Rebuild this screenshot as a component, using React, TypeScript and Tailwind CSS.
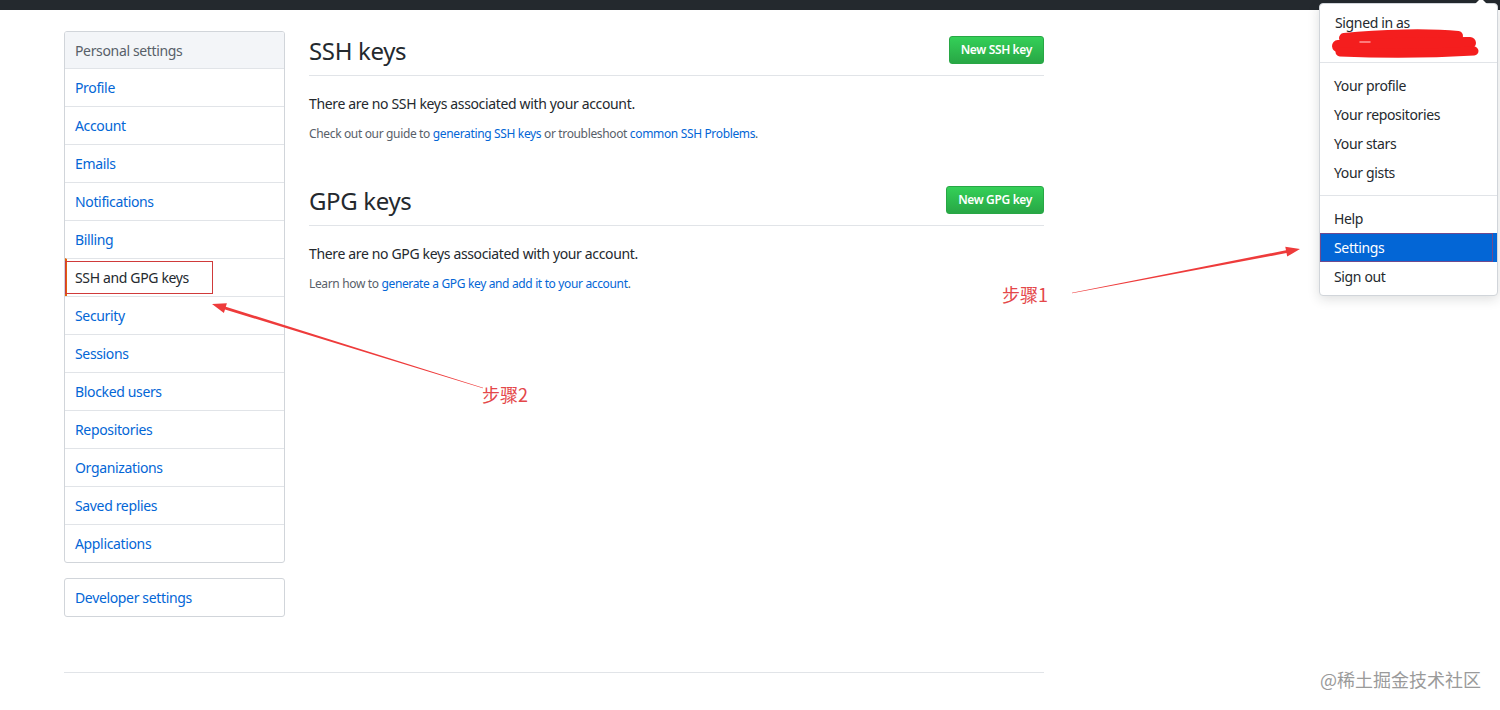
import React from 'react';

// Sidebar entries for the settings menu
const NAV_ITEMS = [
  'Profile',
  'Account',
  'Emails',
  'Notifications',
  'Billing',
  'SSH and GPG keys',
  'Security',
  'Sessions',
  'Blocked users',
  'Repositories',
  'Organizations',
  'Saved replies',
  'Applications',
];

const SELECTED = 'SSH and GPG keys';

const FONT = { fontFamily: '"Noto Sans", "Open Sans", Arial, sans-serif' };
const CJK = { fontFamily: '"Noto Sans CJK SC", "Noto Sans", sans-serif' };

const Sidebar = () => (
  <div className="w-[221px] shrink-0">
    <nav className="border border-[#d1d5da] rounded-[3px] overflow-hidden">
      <div className="h-[36px] flex items-center px-[10px] bg-[#f3f5f8] text-[14px] text-[#586069]">Personal settings</div>
      {NAV_ITEMS.map((item) => {
        const active = item === SELECTED;
        return (
          <div
            key={item}
            className={
              active
                ? 'h-[38px] flex items-center pl-[8px] border-t border-[#e1e4e8] border-l-2 border-l-[#e36209] text-[14px] text-[#24292e]'
                : 'h-[38px] flex items-center px-[10px] border-t border-[#e1e4e8] text-[14px] text-[#0366d6]'
            }
          >
            {item}
          </div>
        );
      })}
    </nav>
    <div className="mt-[15px] h-[39px] border border-[#d1d5da] rounded-[3px] flex items-center px-[10px] text-[14px] text-[#0366d6]">
      Developer settings
    </div>
  </div>
);

interface SectionProps {
  title: string;
  button: string;
  empty: string;
  children: React.ReactNode;
}

const KeySection = ({ title, button, empty, children }: SectionProps) => (
  <section>
    <div className="flex items-center justify-between border-b border-[#e1e4e8] pb-[8px] h-[45px]">
      <h2 className="pt-[4px] text-[24px] font-normal text-[#24292e] leading-none">{title}</h2>
      <button className="mt-[2px] h-[28px] px-[11px] rounded-[3px] border border-[#28a745] bg-gradient-to-b from-[#34d058] to-[#28a745] text-white text-[12px] font-semibold">
        {button}
      </button>
    </div>
    <p className="mt-[17px] text-[14px] text-[#24292e]">{empty}</p>
    <p className="mt-[11px] text-[12px] text-[#586069]">{children}</p>
  </section>
);

const Dropdown = () => (
  <div className="absolute left-[1319px] top-[3px] w-[179px] bg-white border border-[#d1d5da] rounded-[4px] shadow-[0_3px_12px_rgba(27,31,35,0.15)] text-[14px] text-[#24292e]">
    <div className="absolute -top-[6px] right-[10px] w-0 h-0 border-l-[6px] border-r-[6px] border-b-[6px] border-l-transparent border-r-transparent border-b-white" />
    <div className="relative h-[58px] px-[15px] pt-[8px]">
      <div>Signed in as</div>
      <svg className="absolute left-[10px] top-[24px]" width="152" height="34" viewBox="0 0 152 34">
        <path d="M14 10 C 50 6, 100 5, 128 8" stroke="#f41e1e" strokeWidth="10" strokeLinecap="round" fill="none" />
        <path d="M8 18 C 50 16, 100 15, 140 15" stroke="#f41e1e" strokeWidth="12" strokeLinecap="round" fill="none" />
        <path d="M10 24 C 60 26, 110 25, 144 23" stroke="#f41e1e" strokeWidth="9" strokeLinecap="round" fill="none" />
        <path d="M30 14 L 40 14" stroke="#ff9a9a" strokeWidth="1.5" strokeLinecap="round" />
      </svg>
    </div>
    <div className="border-t border-[#e1e4e8] py-[8px]">
      {['Your profile', 'Your repositories', 'Your stars', 'Your gists'].map((t) => (
        <div key={t} className="h-[29px] flex items-center px-[14px]">
          {t}
        </div>
      ))}
    </div>
    <div className="border-t border-[#e1e4e8] pt-[8px] pb-[4px]">
      <div className="h-[29px] flex items-center px-[14px]">Help</div>
      <div className="relative h-[29px] flex items-center px-[14px] bg-[#0366d6] text-white">
        Settings
        <div className="absolute inset-y-0 left-0 right-[4px] border border-[#6f4a8e]" />
      </div>
      <div className="h-[29px] flex items-center px-[14px]">Sign out</div>
    </div>
  </div>
);

const Annotations = () => (
  <>
    <div className="absolute left-[65px] top-[261px] w-[148px] h-[33px] border border-[#d03a3a]" />
    <svg className="absolute left-0 top-0 pointer-events-none" width="1500" height="710" viewBox="0 0 1500 710">
      <polygon
        fill="#ee3b3b"
        points="483.1,387.8 225.8,306.7 226.9,303.3 212,304 223.9,312.9 225.0,309.5 482.9,388.2"
      />
      <polygon
        fill="#ee3b3b"
        points="1071.95,292.75 1285.97,250.2 1285.3,246.74 1300,249 1287.2,256.56 1286.5,253.1 1072.05,293.25"
      />
    </svg>
    <div className="absolute left-[1002px] top-[281px] text-[18px] text-[#e4474a] tracking-normal" style={CJK}>
      步骤1
    </div>
    <div className="absolute left-[482px] top-[381px] text-[18px] text-[#e4474a] tracking-normal" style={CJK}>
      步骤2
    </div>
    <div className="absolute left-[1320px] top-[666px] text-[18px] text-[#9a9a9a] tracking-normal" style={CJK}>
      @稀土掘金技术社区
    </div>
  </>
);

export default function App() {
  return (
    <div className="relative w-[1500px] h-[710px] bg-white overflow-hidden tracking-[-0.35px]" style={FONT}>
      <div className="h-[10px] bg-[#24292e]" />
      <div className="flex pl-[64px] pt-[21px] gap-[24px]">
        <Sidebar />
        <main className="w-[735px]">
          <KeySection title="SSH keys" button="New SSH key" empty="There are no SSH keys associated with your account.">
            Check out our guide to <a className="text-[#0366d6]">generating SSH keys</a> or troubleshoot{' '}
            <a className="text-[#0366d6]">common SSH Problems</a>.
          </KeySection>
          <div className="h-[38px]" />
          <KeySection title="GPG keys" button="New GPG key" empty="There are no GPG keys associated with your account.">
            Learn how to <a className="text-[#0366d6]">generate a GPG key and add it to your account</a>.
          </KeySection>
        </main>
      </div>
      <div className="mx-[64px] w-[980px] mt-[55px] border-t border-[#e1e4e8]" />
      <Dropdown />
      <Annotations />
    </div>
  );
}
